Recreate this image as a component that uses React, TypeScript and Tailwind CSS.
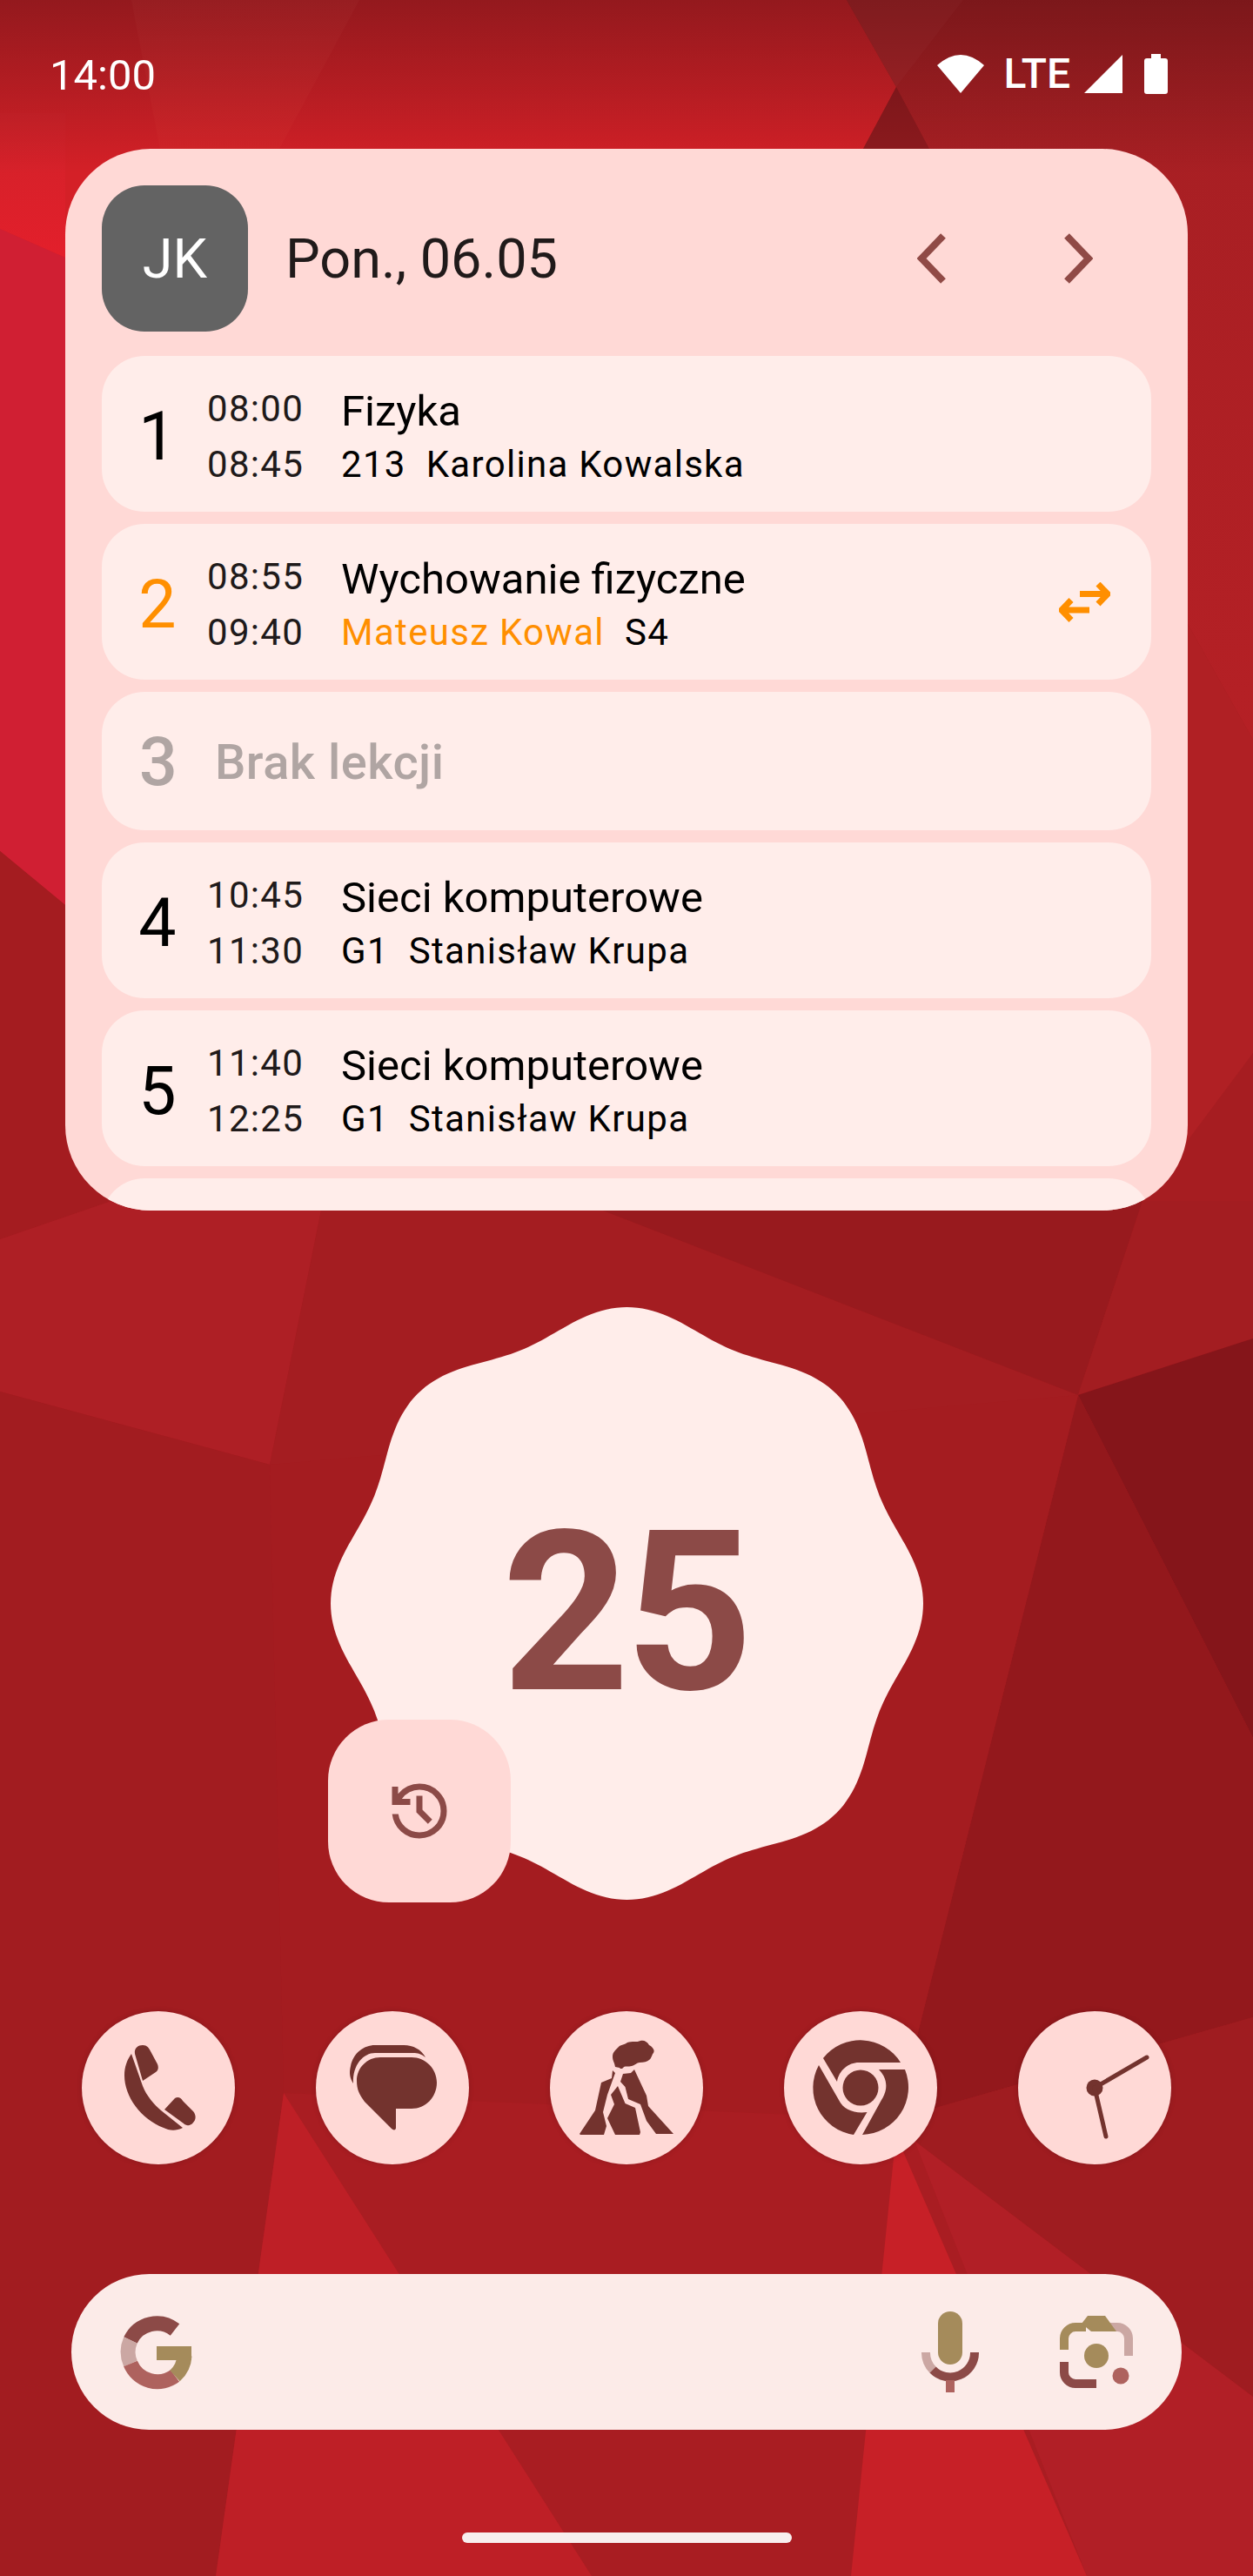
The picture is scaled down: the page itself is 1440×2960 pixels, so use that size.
const wallpaper: [string, string][] = [
  ["0,0 973,0 1030,100 992,171 992,300 0,300", "url(#top)"],
  ["151,0 413,0 321,171 184,171", "url(#topLight)"],
  ["973,0 1107,0 1030,100", "#a92428"],
  ["1107,0 1440,0 1440,850 1365,717 1068,720 1068,171 1030,100", "url(#right)"],
  ["1030,100 992,171 1068,171", "#8f1a1e"],
  ["1365,717 1440,850 1440,1210 1320,1390 1300,1000", "#b02024"],
  ["1440,1210 1440,1380 1313,1380", "#a61d21"],
  ["0,130 75,130 75,296 0,263", "url(#bright)"],
  ["0,263 75,296 75,1040 0,978", "#d01f33"],
  ["0,978 75,1040 128,1380 0,1424", "#a41c20"],
  ["0,1424 128,1380 369,1391 310,1683 0,1599", "#ae1f25"],
  ["369,1391 693,1391 1239,1603 960,1650 310,1683", "#a41d21"],
  ["693,1391 1313,1380 1239,1603", "#981a1e"],
  ["1313,1380 1440,1380 1440,1538 1239,1603", "#a31d21"],
  ["1239,1603 1440,1538 1440,1997", "#85151a"],
  ["1239,1603 1440,1997 1440,2318 1030,2435", "#93181c"],
  ["310,1683 1239,1603 1030,2435 1051,2460 326,2405", "#a41c20"],
  ["0,1599 310,1683 326,2405 248,2960 0,2960", "#a21c20"],
  ["326,2405 1030,2435 1051,2460 1440,2754 1440,2960 248,2960", "#a91d22"],
  ["1030,2435 1440,2318 1440,2754 1051,2460", "#9f1c20"],
  ["326,2405 680,2960 248,2960", "#be1f26"],
  ["1051,2460 1440,2754 1440,2960 1249,2960", "#b11f26"],
  ["1028,2470 1037,2470 1249,2960 978,2960", "#c72027"],
];

const blobPath = (() => {
  const pts: string[] = [];
  for (let i = 0; i < 360; i++) {
    const a = (i * Math.PI) / 180;
    const r = 328 + 12.5 * Math.cos(8 * a);
    pts.push(`${(340.5 + r * Math.sin(a)).toFixed(1)},${(340.5 - r * Math.cos(a)).toFixed(1)}`);
  }
  return `M${pts.join("L")}Z`;
})();

type Lesson = {
  n: string;
  start?: string;
  end?: string;
  title?: string;
  room?: string;
  teacher?: string;
  changed?: boolean;
};

const lessons: Lesson[] = [
  { n: "1", start: "08:00", end: "08:45", title: "Fizyka", room: "213", teacher: "Karolina Kowalska" },
  { n: "2", start: "08:55", end: "09:40", title: "Wychowanie fizyczne", room: "S4", teacher: "Mateusz Kowal", changed: true },
  { n: "3" },
  { n: "4", start: "10:45", end: "11:30", title: "Sieci komputerowe", room: "G1", teacher: "Stanisław Krupa" },
  { n: "5", start: "11:40", end: "12:25", title: "Sieci komputerowe", room: "G1", teacher: "Stanisław Krupa" },
];

function Row({ lesson }: { lesson: Lesson }) {
  if (!lesson.title) {
    return (
      <div className="flex h-[159px] shrink-0 items-center rounded-[49px] bg-[#ffedea] pl-[27px] pt-[3px]">
        <span className="w-[76px] text-center text-[77px] font-medium leading-none text-[#b0a5a3]">{lesson.n}</span>
        <span className="ml-[27px] text-[56px] font-medium tracking-[0.5px] text-[#b0a5a3]">Brak lekcji</span>
      </div>
    );
  }
  return (
    <div className="flex h-[179px] shrink-0 items-center rounded-[49px] bg-[#ffedea] pl-[26px] pr-[47px] pt-[7px]">
      <span className={`w-[76px] text-center text-[77px] leading-none ${lesson.changed ? "text-[#ff8f00]" : "text-black"}`}>
        {lesson.n}
      </span>
      <div className="ml-[19px] flex w-[154px] flex-col text-[42px] leading-[64px] tracking-[1.3px] text-[#201a1a]">
        <span>{lesson.start}</span>
        <span>{lesson.end}</span>
      </div>
      <div className="flex flex-1 flex-col pt-[2px] text-black">
        <span className="text-[49px] leading-[61px]">{lesson.title}</span>
        {lesson.changed ? (
          <span className="text-[42px] leading-[62px] tracking-[1.3px]">
            <span className="text-[#ff8f00]">{lesson.teacher}</span>
            <span className="ml-[23px]">{lesson.room}</span>
          </span>
        ) : (
          <span className="text-[42px] leading-[62px] tracking-[1.3px]">
            <span>{lesson.room}</span>
            <span className="ml-[23px]">{lesson.teacher}</span>
          </span>
        )}
      </div>
      {lesson.changed && (
        <svg className="-mt-[7px]" width="59" height="46" viewBox="0 0 59 46" fill="none" stroke="#ff8f00" strokeWidth="7">
          <path d="M24 13.500H55M45 2L56 13.500L45 25" />
          <path d="M35 32H4M14 20.500L3 32L14 43.500" />
        </svg>
      )}
    </div>
  );
}

function PhoneIcon() {
  return (
    <svg width="176" height="176" viewBox="-88 -88 176 176" fill="#73332e">
      <path d="M-27 -39C-28 -46 -23 -49 -18 -49C-13 -49 -11 -46 -9 -42L-2 -29C1 -24 0 -20 -3 -18L-18 -8Z" />
      <path d="M-31 -39L-18 -2C-14 9 -4 20 3 26L28 46C20 50 12 49 6 46C-20 36 -39 10 -39 -14C-39 -24 -36 -32 -31 -39Z" />
      <path d="M7 25L19 12C22 10 26 11 28 15L40 27C44 32 43 37 40 40C37 44 32 44 29 41Z" />
    </svg>
  );
}

function MessagesIcon() {
  return (
    <svg width="176" height="176" viewBox="-88 -88 176 176" fill="#73332e">
      <path d="M-45 -5C-49 -11 -50 -17 -48 -25C-45 -40 -33 -49 -20 -49H13C24 -49 33 -44 38 -35C33 -39 29 -40 24 -40H-20C-33 -40 -46 -27 -45 -5Z" />
      <path d="M-14 -35H22C38 -35 51 -22 51 -6C51 11 38 24 22 24H4V46C4 49 1 49 -1 47L-32 16C-38 8 -41 2 -41 -8C-41 -23 -29 -35 -14 -35Z" />
    </svg>
  );
}

function VolcanoIcon() {
  return (
    <svg width="176" height="176" viewBox="-88 -88 176 176" fill="#73332e">
      <path d="M-13 -24C-14 -30 -16 -31 -16 -36C-16 -41 -12 -44 -10 -46C-7 -50 -3 -49 1 -52C6 -54 12 -52 16 -54C20 -55 24 -53 26 -49C30 -47 33 -43 31 -40C29 -38 29 -34 26 -32C24 -30 20 -29 15 -29C12 -29 10 -26 6 -25C2 -24 -1 -25 -3 -24C-4 -22 -7 -21 -8 -23Z" />
      <path d="M-54 53L-36 26L-29 -6L-17 -11L-16 -20L-13 -17L-22 8L-27 28L-23 44L-26 54H-53Z" />
      <path d="M-10 -2L-1.500 18L10 23L16 51L15 54H-13L-22 35L-14 19L-18 8Z" />
      <path d="M-7 -7L-4 -16L5 -17L9 -21L23 9L25 21L54 53H34L23 38L16 19L2 13L-1.500 -1Z" />
    </svg>
  );
}

function ChromeIcon() {
  return (
    <svg width="176" height="176" viewBox="-88 -88 176 176" fill="#73332e">
      <circle cx="0" cy="0" r="20.500" />
      <path d="M-43 -34A54.500 54.500 0 0 1 46 -29H-2C-14 -29 -25 -20 -27 -7Z" />
      <path d="M-48 -26A54.500 54.500 0 0 0 -8 54L7.500 28C-7 30 -20 25 -25 14Z" />
      <path d="M21 -21H51A54.500 54.500 0 0 1 2 54L24 14C32 2 31 -11 21 -21Z" />
    </svg>
  );
}

function ClockIcon() {
  return (
    <svg width="176" height="176" viewBox="-88 -88 176 176" fill="none" stroke="#73332e" strokeWidth="5" strokeLinecap="round">
      <circle cx="0" cy="0" r="9.500" fill="#73332e" stroke="none" />
      <path d="M0 0L60 -35" />
      <path d="M0 0L13 56" />
    </svg>
  );
}

function GoogleLogo() {
  return (
    <svg width="90" height="90" viewBox="-45 -45 90 90" fill="none" strokeWidth="17">
      <path d="M22 -26A33.500 33.500 0 0 0 -29 -14" stroke="#8c4a47" />
      <path d="M-29 -14A33.500 33.500 0 0 0 -29 13" stroke="#cba7a3" />
      <path d="M-29 13A33.500 33.500 0 0 0 22 27" stroke="#ae625e" />
      <path d="M22 27A33.500 33.500 0 0 0 33 4" stroke="#a58b5b" />
      <rect x="1" y="-7" width="40" height="16" fill="#a58b5b" stroke="none" />
    </svg>
  );
}

function MicIcon() {
  return (
    <svg width="66" height="93" viewBox="0 0 66 93" fill="none">
      <rect x="19" y="0" width="28" height="61" rx="14" fill="#a58b5b" />
      <path d="M5 47A28 28 0 0 0 13 67" stroke="#cba7a3" strokeWidth="10" />
      <path d="M13 67A28 28 0 0 0 61 47" stroke="#8c4a47" strokeWidth="10" />
      <rect x="28" y="79" width="10" height="14" fill="#ae625e" />
    </svg>
  );
}

function LensIcon() {
  return (
    <svg width="84" height="85" viewBox="0 0 84 85" fill="none" strokeWidth="10">
      <path d="M5 40V27C5 20 11 14 18 14H30" stroke="#a58b5b" />
      <path d="M58 14H66C73 14 79 20 79 27V47" stroke="#cba7a3" />
      <path d="M5 54V66C5 73 11 79 18 79H42" stroke="#8c4a47" />
      <path d="M25 10L32 1H52L65 19H36Z" fill="#a58b5b" stroke="none" />
      <circle cx="42" cy="47" r="14" fill="#a58b5b" stroke="none" />
      <circle cx="70" cy="70" r="9.500" fill="#ae625e" stroke="none" />
    </svg>
  );
}

export default function App() {
  return (
    <div className="relative h-[2960px] w-[1440px] overflow-hidden bg-[#a51c20] font-['Roboto',sans-serif]">
      {/* Wallpaper */}
      <svg className="absolute inset-0" width="1440" height="2960" viewBox="0 0 1440 2960">
        <defs>
          <linearGradient id="top" x1="0" y1="0" x2="0" y2="1">
            <stop offset="0" stopColor="#c52127" />
            <stop offset="0.6" stopColor="#d42027" />
          </linearGradient>
          <linearGradient id="topLight" x1="0" y1="0" x2="0" y2="1">
            <stop offset="0" stopColor="#c9272c" />
            <stop offset="1" stopColor="#d52429" />
          </linearGradient>
          <linearGradient id="bright" x1="0" y1="0" x2="0" y2="1">
            <stop offset="0" stopColor="#d02229" />
            <stop offset="1" stopColor="#e31f2b" />
          </linearGradient>
          <linearGradient id="right" x1="0" y1="0" x2="0" y2="1">
            <stop offset="0" stopColor="#a51f23" />
            <stop offset="1" stopColor="#b52025" />
          </linearGradient>
        </defs>
        {wallpaper.map(([points, fill]) => (
          <polygon key={points} points={points} fill={fill} />
        ))}
      </svg>
      <div className="absolute inset-x-0 top-0 h-[200px] bg-gradient-to-b from-black/25 to-transparent" />

      <div className="relative flex flex-col">
        {/* Status bar */}
        <header className="flex h-[171px] items-start justify-between pl-[57px] pr-[98px] pt-[57px] text-white">
          <span className="text-[49px] leading-[60px]">14:00</span>
          <div className="flex items-center pt-[5px]">
            <svg width="54" height="44" viewBox="0 0 54 44" fill="#fff">
              <path d="M27 44L0 12Q27 -12 54 12Z" />
            </svg>
            <span className="ml-[23px] text-[48px] font-medium leading-[44px]">LTE</span>
            <svg className="ml-[16px]" width="44" height="44" viewBox="0 0 44 44" fill="#fff">
              <path d="M0 44H44V0Z" />
            </svg>
            <svg className="ml-[25px]" width="27" height="46" viewBox="0 0 27 46" fill="#fff">
              <path d="M8 5V0H19V5H24C26 5 27 6 27 8V43C27 45 26 46 24 46H3C1 46 0 45 0 43V8C0 6 1 5 3 5Z" />
            </svg>
          </div>
        </header>

        {/* Timetable widget */}
        <section className="mx-[75px] flex h-[1220px] flex-col gap-[14px] overflow-hidden rounded-[98px] bg-[#ffd9d6] px-[42px] pt-[42px]">
          <div className="mb-[14px] flex h-[168px] shrink-0 items-center">
            <div className="flex h-[168px] w-[168px] items-center justify-center rounded-[49px] bg-[#636363] pt-[3px] text-[63px] text-white">
              JK
            </div>
            <span className="ml-[43px] flex-1 pt-[3px] text-[63px] text-[#201a1a]">Pon., 06.05</span>
            <button className="flex h-[168px] w-[168px] items-center justify-center">
              <svg width="34" height="58" viewBox="0 0 34 58" fill="none" stroke="#904a46" strokeWidth="8">
                <path d="M30 3L5 29L30 55" />
              </svg>
            </button>
            <button className="flex h-[168px] w-[168px] items-center justify-center">
              <svg width="34" height="58" viewBox="0 0 34 58" fill="none" stroke="#904a46" strokeWidth="8">
                <path d="M4 3L29 29L4 55" />
              </svg>
            </button>
          </div>
          {lessons.map((lesson) => (
            <Row key={lesson.n} lesson={lesson} />
          ))}
          <div className="h-[179px] shrink-0 rounded-[49px] bg-[#ffedea]" />
        </section>

        {/* Counter */}
        <section className="relative mx-auto mt-[111px] flex h-[681px] w-[681px] items-center justify-center">
          <svg className="absolute inset-0" width="681" height="681" viewBox="0 0 681 681">
            <path d={blobPath} fill="#ffedea" />
          </svg>
          <span className="relative mr-[3px] mt-[22px] text-[256px] font-bold leading-none tracking-[-5px] text-[#8c4a47]">25</span>
          <button className="absolute -bottom-[3px] -left-[3px] flex h-[210px] w-[210px] items-center justify-center rounded-[70px] bg-[#ffd9d6]">
            <svg width="84" height="84" viewBox="0 0 24 24" fill="#8c4a47">
              <path d="M12 21q-3.450 0-6.012-2.288T3.050 13H5.100q.35 2.600 2.313 4.300T12 19q2.925 0 4.963-2.038T19 12q0-2.925-2.037-4.962T12 5q-1.725 0-3.225.8T6.250 8H9v2H3V4h2v2.350q1.275-1.600 3.113-2.475T12 3q3.750 0 6.375 2.625T21 12q0 3.750-2.625 6.375T12 21Zm2.800-4.800L11 12.400V7h2v4.600l3.200 3.200-1.400 1.400Z" />
            </svg>
          </button>
        </section>

        {/* Dock */}
        <section className="mt-[128px] flex justify-between px-[94px]">
          {[PhoneIcon, MessagesIcon, VolcanoIcon, ChromeIcon, ClockIcon].map((Icon, i) => (
            <div key={i} className="h-[176px] w-[176px] rounded-full bg-[#ffd9d6] shadow-[0_0_6px_rgba(0,0,0,0.15)]">
              <Icon />
            </div>
          ))}
        </section>

        {/* Search bar */}
        <section className="mx-[82px] mt-[126px] flex h-[179px] items-center rounded-full bg-[#fcebe8]">
          <div className="ml-[52px]">
            <GoogleLogo />
          </div>
          <div className="ml-auto mt-[-1px]">
            <MicIcon />
          </div>
          <div className="ml-[93px] mr-[56px]">
            <LensIcon />
          </div>
        </section>

        {/* Gesture pill */}
        <div className="mx-auto mt-[118px] h-[12px] w-[379px] rounded-full bg-[#f8eeee]" />
      </div>
    </div>
  );
}
